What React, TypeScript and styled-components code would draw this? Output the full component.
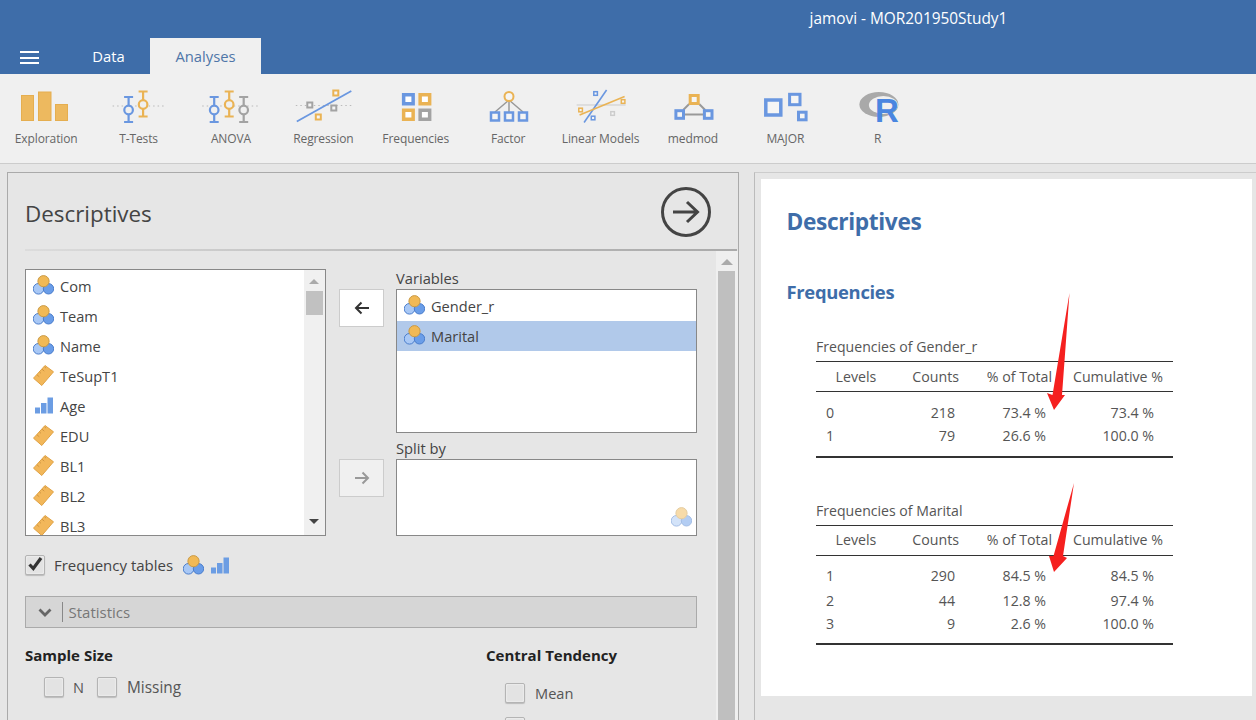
import React from "react";
import styled, { createGlobalStyle } from "styled-components";

const Global = createGlobalStyle`
  html, body { margin: 0; padding: 0; background: #e6e6e6; }
  * { box-sizing: border-box; }
  body { font-family: "Open Sans", "Noto Sans", sans-serif; color: #333; }
`;

const Page = styled.div`
  width: 1256px; height: 720px; overflow: hidden;
  display: flex; flex-direction: column; background: #e6e6e6;
`;
const Header = styled.header`background: #3e6da9; height: 74px; color: #fff; flex: none;`;
const TitleBar = styled.div`
  height: 38px; padding: 0 0 2px 809.5px; display: flex; align-items: center;
  font-size: 15.4px;
`;
const TabRow = styled.div`height: 36px; display: flex;`;
const MenuButton = styled.div`
  width: 67px; padding: 13px 0 0 20px; display: flex; flex-direction: column; gap: 3.5px;
  & > i { display: block; width: 19px; height: 2px; background: #fff; }
`;
const Tab = styled.div<{ $active?: boolean; $w: number }>`
  width: ${(p) => p.$w}px; height: 36px; display: flex; align-items: center; justify-content: center;
  font-size: 14.8px; padding-bottom: 1px;
  background: ${(p) => (p.$active ? "#f0f0f0" : "transparent")};
  color: ${(p) => (p.$active ? "#4f76a8" : "#fff")};
`;
const Ribbon = styled.nav`
  height: 90px; flex: none; background: #f0f0f0; border-bottom: 1px solid #ccc; display: flex;
`;
const RibbonButton = styled.div`
  width: 92.4px; flex: none; display: flex; flex-direction: column; align-items: center; padding-top: 14px;
`;
const RibbonSvg = styled.svg`width: 92.4px; height: 36px; display: block; overflow: visible;`;
const RibbonLabel = styled.div`
  margin-top: 6px; font-size: 12px; line-height: 17px; color: #666; white-space: nowrap; letter-spacing: -0.1px;
`;

const Main = styled.main`flex: 1; display: flex; min-height: 0;`;
const OptionsPanel = styled.section`
  margin: 8px 0 0 7px; width: 732px; border: 1px solid #aaa; border-bottom: 0;
  display: flex; flex-direction: column; overflow: hidden;
`;
const PanelHead = styled.div`
  height: 76px; flex: none; padding: 0 27px 0 17px; display: flex; align-items: center; justify-content: space-between;
`;
const PanelTitle = styled.h2`margin: 0; font-size: 22.4px; font-weight: 400; color: #444; padding-top: 4px;`;
const RunSvg = styled.svg`width: 50px; height: 50px; display: block; margin-top: 1px;`;
const PanelRule = styled.div`
  height: 2px; flex: none; margin: 0 1px 0 17px;
  background: linear-gradient(to right, #dcdcdc, #bdbdbd 50%, #aaa);
`;
const PanelBody = styled.div`flex: 1; display: flex; min-height: 0;`;
const Options = styled.div`width: 708px; flex: none; padding: 18px 0 0 17px;`;
const PanelScroll = styled.div`
  width: 22px; flex: none; background: #efefef; padding: 20px 3px 0 2px; position: relative;
  & > b { display: block; height: 100%; background: #bfbfbf; }
  &::before { content: ""; position: absolute; top: 8px; left: 5px; border: 6px solid transparent; border-top: 0; border-bottom: 6px solid #aaa; }
`;
const Supplier = styled.div`
  display: grid; width: 672px;
  grid-template-columns: 301px 13px 45px 12px 301px;
  grid-template-rows: 20px 144px 26px 77px;
`;
const VarList = styled.div`
  grid-column: 1; grid-row: 1 / 5; background: #fff; border: 1px solid #888; position: relative; overflow: hidden; padding-top: 1px;
`;
const VarRow = styled.div<{ $selected?: boolean }>`
  height: 30px; display: flex; align-items: center; padding-left: 7px; gap: 6px; flex: none;
  font-size: 14.6px; color: #444; padding-bottom: 1px; background: ${(p) => (p.$selected ? "#b1c9ea" : "transparent")};
`;
const VarIcon = styled.svg`width: 21px; height: 21px; flex: none; display: block;`;
const ListScroll = styled.div`
  position: absolute; top: 0; right: 0; bottom: 0; width: 21px; background: #f0f0f0;
  &::before { content: ""; position: absolute; top: 9px; left: 5px; border: 5px solid transparent; border-top: 0; border-bottom: 5px solid #aaa; }
  &::after { content: ""; position: absolute; bottom: 11px; left: 5px; border: 5px solid transparent; border-bottom: 0; border-top: 5px solid #444; }
  & > b { position: absolute; top: 21px; left: 2px; width: 17px; height: 24px; background: #c1c1c1; }
`;
const MoveButton = styled.button<{ $row: number; $off?: boolean }>`
  grid-column: 3; grid-row: ${(p) => p.$row}; width: 45px; height: 38px; padding: 0; display: flex; align-items: center; justify-content: center;
  background: ${(p) => (p.$off ? "#f0f0f0" : "#fff")}; border: 1px solid #ccc;
`;
const BoxLabel = styled.div<{ $row: number }>`
  grid-column: 5; grid-row: ${(p) => p.$row}; align-self: end; font-size: 14.7px; line-height: 20px; color: #444; padding-bottom: 1.5px;
`;
const TargetBox = styled.div<{ $row: number }>`
  grid-column: 5; grid-row: ${(p) => p.$row}; background: #fff; border: 1px solid #888; padding-top: 1px; position: relative;
`;
const GhostIcon = styled.div`position: absolute; right: 4px; bottom: 7px; opacity: .5;`;
const FreqRow = styled.div`margin-top: 19px; height: 20px; display: flex; align-items: center; font-size: 15px; color: #444; white-space: nowrap;`;
const Check = styled.span`
  display: block; position: relative; width: 20px; height: 20px; flex: none; border: 1px solid #b4b4b4; border-radius: 2px; background: #e3e3e3;
  box-shadow: inset 0 0 2px #fff, 0 1px 1px #bbb;
`;
const CheckMark = styled.svg`position: absolute; left: -1px; top: -1px; width: 20px; height: 20px;`;
const FreqText = styled.span`margin: 0 10px 0 9px;`;
const LegendIcons = styled.span`display: flex; gap: 5px;`;
const SectionBar = styled.div`
  margin-top: 21px; width: 672px; height: 32px; background: #d6d6d6; border: 1px solid #aaa;
  display: flex; align-items: center; font-size: 15px; color: #777; padding-left: 12px;
`;
const Divider = styled.i`display: block; width: 1px; height: 20px; background: #888; margin: 0 5.5px 0 10px;`;
const OptColumns = styled.div`display: grid; grid-template-columns: 461px 1fr; margin-top: 17px;`;
const OptHead = styled.div`font-size: 15px; line-height: 20px; font-weight: 700; color: #222;`;
const OptRow = styled.div<{ $top: number }>`
  margin: ${(p) => p.$top}px 0 0 19px; display: flex; align-items: center; height: 20px; font-size: 14.6px; color: #555;
`;
const OptText = styled.span<{ $gap: number; $size?: number }>`
  margin: 0 13px 0 ${(p) => p.$gap}px;
  font-size: ${(p) => p.$size ?? 14.6}px;
`;

const Splitter = styled.div`width: 15px; flex: none;`;
const ResultsPane = styled.section`
  flex: 1; margin-top: 8px; border-left: 1px solid #bbb; border-top: 1px solid #ccc; padding: 6px 4px 0 6px;
`;
const ResultCard = styled.div`
  position: relative; height: 517px; background: #fff; padding: 28px 0 0 25.5px; color: #555;
`;
const H1 = styled.h1`margin: 0; font-size: 22.7px; line-height: 30px; font-weight: 700; color: #3e6da9; letter-spacing: -0.35px;`;
const H2 = styled.h2`margin: 42px 0 0; font-size: 18.4px; line-height: 26px; font-weight: 700; color: #3e6da9; letter-spacing: -0.3px;`;
const TableBlock = styled.div<{ $top: number }>`margin: ${(p) => p.$top}px 0 0 29.5px; width: 357px;`;
const TableTitle = styled.div`font-size: 14.1px; line-height: 20px; padding: 1px 0 4px; color: #555;`;
const DataTable = styled.table`
  width: 357px; table-layout: fixed; border-collapse: collapse; font-size: 14.2px; color: #555;
  border-top: 1px solid #333; border-bottom: 2px solid #333;
  thead tr { height: 30px; border-bottom: 1px solid #333; }
  th { font-weight: 400; padding: 0 0 1px; text-align: right; }
  th:nth-child(1) { text-align: center; }
  th:nth-child(2) { padding-right: 6px; }
  th:nth-child(3) { padding-right: 6px; }
  th:nth-child(4) { padding-right: 10px; }
  td { height: 24px; padding: 0; text-align: right; }
  td:nth-child(1) { text-align: left; padding-left: 10px; }
  td:nth-child(2) { padding-right: 10px; }
  td:nth-child(3) { padding-right: 12px; }
  td:nth-child(4) { padding-right: 19px; }
  tbody tr:first-child td { height: 33px; padding-top: 8.5px; padding-bottom: 0.5px; }
  tbody tr:last-child td { height: 32px; padding-bottom: 8.5px; }
`;
const ArrowOverlay = styled.svg`position: absolute; left: 0; top: 0; width: 491px; height: 517px; pointer-events: none;`;

const Nominal = () => (
  <VarIcon viewBox="0 0 21 21">
    <circle cx="5.500" cy="13.800" r="5.300" fill="#a9c8f5" stroke="#4a7dcc" strokeWidth="1" />
    <circle cx="15.500" cy="13.800" r="5.200" fill="#6a9de8" stroke="#4a7dcc" strokeWidth="1" />
    <circle cx="10.500" cy="6.200" r="5.600" fill="#f1b955" stroke="#c99a45" strokeWidth="1" />
  </VarIcon>
);
const Ruler = () => (
  <VarIcon viewBox="0 0 21 21">
    <path d="M.5 13.200 12 .5 20.500 6.800 8.800 20.500Z" fill="#f2b75a" stroke="#dfa245" strokeWidth="1" />
    <path d="M4 9.800l2.300 2M6.500 7l1.500 1.300M9 4.200l2.300 2M11.500 1.800l1.500 1.300" stroke="#c98f3c" strokeWidth=".8" />
  </VarIcon>
);
const Ordinal = () => (
  <VarIcon viewBox="0 0 21 21">
    <path d="M2 12.500h5v6H2zM8 8h5.500v10.500H8zM14.500 2.500H20v16h-5.500z" fill="#6c9de3" />
  </VarIcon>
);

const O = "#eab354", B = "#6a97e0", G = "#a3a3a3";
const Dots = ({ x1, x2, y }: { x1: number; x2: number; y: number }) => (
  <line x1={x1} x2={x2} y1={y} y2={y} stroke="#bbb" strokeWidth="1" strokeDasharray="1.500 3" />
);
const ErrBar = ({ x, t, c }: { x: number; t: number; c: string }) => (
  <g stroke={c} strokeWidth="2.200" fill="#f0f0f0">
    <path d={`M${x - 4.5} ${t}h9M${x - 4.5} ${t + 25}h9M${x} ${t}v25`} fill="none" />
    <circle cx={x} cy={t + 13} r="4.300" />
  </g>
);
const Sq = ({ x, y, s = 4, c, w = 2 }: { x: number; y: number; s?: number; c: string; w?: number }) => (
  <rect x={x - s} y={y - s} width={s * 2} height={s * 2} fill="#f5f5f5" stroke={c} strokeWidth={w} />
);
const FreqCell = ({ x, y, c }: { x: number; y: number; c: string }) => (
  <g>
    <rect x={x} y={y} width="13" height="12.500" fill={c} />
    <rect x={x + 3.500} y={y + 3.500} width="6" height="5.500" fill="#fff" />
  </g>
);

const items: { label: string; art: React.ReactNode }[] = [
  {
    label: "Exploration",
    art: (
      <g fill="#edb95f" stroke="#e5ae50">
        <rect x="21.500" y="95.500" width="12" height="25" />
        <rect x="38.500" y="92" width="12.500" height="28.500" />
        <rect x="55.500" y="104.500" width="12" height="16" />
      </g>
    ),
  },
  {
    label: "T-Tests",
    art: (
      <>
        <Dots x1={113} x2={167} y={106} />
        <ErrBar x={129} t={97} c={B} />
        <ErrBar x={143.500} t={91.500} c={O} />
      </>
    ),
  },
  {
    label: "ANOVA",
    art: (
      <>
        <Dots x1={202} x2={258} y={106} />
        <ErrBar x={214} t={97} c={B} />
        <ErrBar x={229} t={91.500} c={O} />
        <ErrBar x={243.500} t={97} c={G} />
      </>
    ),
  },
  {
    label: "Regression",
    art: (
      <>
        <Dots x1={296} x2={352} y={105.500} />
        <line x1="297" y1="121.500" x2="351.500" y2="91" stroke={B} strokeWidth="1.800" />
        <Sq x={310} y={105} s={2.500} c={G} />
        <Sq x={336} y={93} s={2.500} c={O} />
        <Sq x={334} y={108} s={2.500} c={G} />
        <Sq x={318.500} y={117} s={2.500} c={O} />
      </>
    ),
  },
  {
    label: "Frequencies",
    art: (
      <>
        <FreqCell x={401.500} y={93} c={B} />
        <FreqCell x={418} y={93} c={O} />
        <FreqCell x={401.500} y={108.500} c={O} />
        <FreqCell x={418} y={108.500} c={G} />
      </>
    ),
  },
  {
    label: "Factor",
    art: (
      <>
        <path d="M509 100 495 112M509 100v12M509 100 523 112" stroke="#999" strokeWidth="1.500" fill="none" />
        <circle cx="509" cy="96.500" r="4.500" fill="#f5f5f5" stroke={O} strokeWidth="2" />
        <Sq x={495} y={116.500} c={B} w={2.500} />
        <Sq x={509} y={116.500} c={B} w={2.500} />
        <Sq x={523} y={116.500} c={B} w={2.500} />
      </>
    ),
  },
  {
    label: "Linear Models",
    art: (
      <>
        <line x1="577" y1="105" x2="626" y2="105" stroke="#ccc" strokeWidth="1" />
        <line x1="584.500" y1="122.500" x2="607" y2="90" stroke={B} strokeWidth="1.600" />
        <line x1="580" y1="115" x2="625" y2="96.500" stroke={O} strokeWidth="1.600" />
        <Sq x={596} y={93.500} s={1.800} c={B} w={1.500} />
        <Sq x={581} y={110} s={1.800} c={O} w={1.500} />
        <Sq x={593.500} y={118} s={1.800} c={B} w={1.500} />
        <Sq x={613} y={113.500} s={1.800} c="#ccc" w={1.500} />
        <Sq x={623.500} y={101.500} s={1.800} c={O} w={1.500} />
      </>
    ),
  },
  {
    label: "medmod",
    art: (
      <>
        <path d="M689 104 683 110M699 104 705 110M684 114.500h20" stroke="#999" strokeWidth="2" fill="none" />
        <Sq x={694} y={99.500} s={4} c={O} w={3} />
        <Sq x={679.500} y={114.500} s={3.800} c={B} w={3} />
        <Sq x={708} y={114.500} s={3.800} c={B} w={3} />
      </>
    ),
  },
  {
    label: "MAJOR",
    art: (
      <>
        <Sq x={773.500} y={107.500} s={7.500} c={B} w={3.500} />
        <Sq x={795} y={99.500} s={5.200} c={B} w={3} />
        <Sq x={802.500} y={116} s={3.800} c={B} w={3} />
      </>
    ),
  },
  {
    label: "R",
    art: (
      <>
        <ellipse cx="878.500" cy="104.500" rx="19.500" ry="12.500" fill="#a9a9a9" />
        <ellipse cx="883" cy="105" rx="14.500" ry="9" fill="#f0f0f0" />
        <text x="886.500" y="122" fontFamily="Liberation Sans, sans-serif" fontWeight="700" fontSize="33" fill="#4a86e0" textAnchor="middle">R</text>
      </>
    ),
  },
];

const vars: [string, "n" | "r" | "o"][] = [
  ["Com", "n"], ["Team", "n"], ["Name", "n"], ["TeSupT1", "r"], ["Age", "o"],
  ["EDU", "r"], ["BL1", "r"], ["BL2", "r"], ["BL3", "r"],
];

const ArrowGlyph = ({ dir, c }: { dir: "l" | "r"; c: string }) => (
  <svg width="16" height="14" viewBox="0 0 16 14">
    <path d={dir === "l" ? "M15 7H2M7.500 1.500 2 7l5.500 5.500" : "M1 7h13M8.500 1.500 14 7l-5.500 5.500"} fill="none" stroke={c} strokeWidth="2" />
  </svg>
);

const Freq = ({ title, rows, top }: { title: string; rows: string[][]; top: number }) => (
  <TableBlock $top={top}>
    <TableTitle>{title}</TableTitle>
    <DataTable>
      <colgroup>
        <col width="80" />
        <col width="69" />
        <col width="93" />
        <col width="115" />
      </colgroup>
      <thead>
        <tr><th>Levels</th><th>Counts</th><th>% of Total</th><th>Cumulative %</th></tr>
      </thead>
      <tbody>
        {rows.map((r) => (
          <tr key={r[0]}>{r.map((c, i) => <td key={i}>{c}</td>)}</tr>
        ))}
      </tbody>
    </DataTable>
  </TableBlock>
);

export default function App() {
  return (
    <Page>
      <Global />
      <Header>
        <TitleBar>jamovi - MOR201950Study1</TitleBar>
        <TabRow>
          <MenuButton><i /><i /><i /></MenuButton>
          <Tab $w={83}>Data</Tab>
          <Tab $w={111} $active>Analyses</Tab>
        </TabRow>
      </Header>
      <Ribbon>
        {items.map((it, i) => (
          <RibbonButton key={it.label}>
            <RibbonSvg viewBox={`${i * 92.4} 88 92.4 36`}>{it.art}</RibbonSvg>
            <RibbonLabel>{it.label}</RibbonLabel>
          </RibbonButton>
        ))}
      </Ribbon>
      <Main>
        <OptionsPanel>
          <PanelHead>
            <PanelTitle>Descriptives</PanelTitle>
            <RunSvg viewBox="0 0 50 50">
              <circle cx="25" cy="25" r="23.500" fill="none" stroke="#444" strokeWidth="3" />
              <path d="M12 25h24M26 15l10.500 10L26 35" fill="none" stroke="#444" strokeWidth="3" />
            </RunSvg>
          </PanelHead>
          <PanelRule />
          <PanelBody>
            <Options>
              <Supplier>
                <VarList>
                  {vars.map(([n, t]) => (
                    <VarRow key={n}>
                      {t === "n" ? <Nominal /> : t === "r" ? <Ruler /> : <Ordinal />}
                      {n}
                    </VarRow>
                  ))}
                  <ListScroll><b /></ListScroll>
                </VarList>
                <BoxLabel $row={1}>Variables</BoxLabel>
                <MoveButton $row={2}><ArrowGlyph dir="l" c="#333" /></MoveButton>
                <TargetBox $row={2}>
                  <VarRow><Nominal />Gender_r</VarRow>
                  <VarRow $selected><Nominal />Marital</VarRow>
                </TargetBox>
                <BoxLabel $row={3}>Split by</BoxLabel>
                <MoveButton $row={4} $off><ArrowGlyph dir="r" c="#999" /></MoveButton>
                <TargetBox $row={4}>
                  <GhostIcon><Nominal /></GhostIcon>
                </TargetBox>
              </Supplier>
              <FreqRow>
                <Check>
                  <CheckMark viewBox="0 0 20 20">
                    <path d="M4.500 9.500 8.300 13.500 16 3" fill="none" stroke="#333" strokeWidth="3.200" />
                  </CheckMark>
                </Check>
                <FreqText>Frequency tables</FreqText>
                <LegendIcons><Nominal /><Ordinal /></LegendIcons>
              </FreqRow>
              <SectionBar>
                <svg width="14" height="9" viewBox="0 0 14 9">
                  <path d="M1.500 1.500 7 7l5.500-5.500" fill="none" stroke="#666" strokeWidth="2.800" />
                </svg>
                <Divider />
                Statistics
              </SectionBar>
              <OptColumns>
                <div>
                  <OptHead>Sample Size</OptHead>
                  <OptRow $top={12}>
                    <Check /><OptText $gap={9}>N</OptText>
                    <Check /><OptText $gap={10} $size={15.4}>Missing</OptText>
                  </OptRow>
                </div>
                <div>
                  <OptHead>Central Tendency</OptHead>
                  <OptRow $top={18}><Check /><OptText $gap={10}>Mean</OptText></OptRow>
                  <OptRow $top={14}><Check /></OptRow>
                </div>
              </OptColumns>
            </Options>
            <PanelScroll><b /></PanelScroll>
          </PanelBody>
        </OptionsPanel>
        <Splitter />
        <ResultsPane>
          <ResultCard>
            <H1>Descriptives</H1>
            <H2>Frequencies</H2>
            <Freq
              top={31}
              title="Frequencies of Gender_r"
              rows={[["0", "218", "73.4 %", "73.4 %"], ["1", "79", "26.6 %", "100.0 %"]]}
            />
            <Freq
              top={42}
              title="Frequencies of Marital"
              rows={[["1", "290", "84.5 %", "84.5 %"], ["2", "44", "12.8 %", "97.4 %"], ["3", "9", "2.6 %", "100.0 %"]]}
            />
            <ArrowOverlay viewBox="761 179 491 517">
              <path d="M1069.500 293 1062 395 1065 395 1054 410 1047 393 1052.500 395Z" fill="#f5201f" />
              <path d="M1074 483 1063 556 1067 558 1054 572 1049 556 1053.500 556Z" fill="#f5201f" />
            </ArrowOverlay>
          </ResultCard>
        </ResultsPane>
      </Main>
    </Page>
  );
}
